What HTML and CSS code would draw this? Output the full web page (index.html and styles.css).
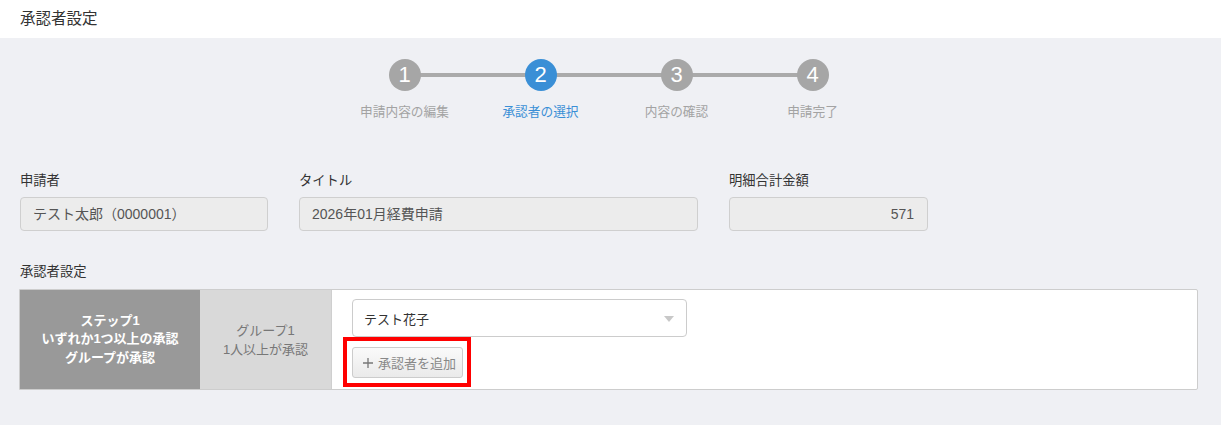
FILE: index.html
```html
<!DOCTYPE html>
<html lang="ja">
<head>
<meta charset="utf-8">
<link rel="stylesheet" href="styles.css">
</head>
<body>
<header class="topbar">承認者設定</header>
<main class="content">
  <div class="stepper">
    <div class="step done">
      <div class="step-track"><span class="dot">1</span></div>
      <div class="step-label">申請内容の編集</div>
    </div>
    <div class="step active">
      <div class="step-track"><span class="dot">2</span></div>
      <div class="step-label">承認者の選択</div>
    </div>
    <div class="step">
      <div class="step-track"><span class="dot">3</span></div>
      <div class="step-label">内容の確認</div>
    </div>
    <div class="step last">
      <div class="step-track"><span class="dot">4</span></div>
      <div class="step-label">申請完了</div>
    </div>
  </div>

  <div class="fields">
    <div class="field f-applicant">
      <label class="field-label">申請者</label>
      <div class="input">テスト太郎（0000001）</div>
    </div>
    <div class="field f-title">
      <label class="field-label">タイトル</label>
      <div class="input">2026年01月経費申請</div>
    </div>
    <div class="field f-amount">
      <label class="field-label">明細合計金額</label>
      <div class="input num">571</div>
    </div>
  </div>

  <div class="section-label">承認者設定</div>
  <div class="approval">
    <div class="cell-step">ステップ1<br>いずれか1つ以上の承認<br>グループが承認</div>
    <div class="cell-group">グループ1<br>1人以上が承認</div>
    <div class="cell-body">
      <div class="select">
        <span>テスト花子</span>
        <svg class="caret" width="10" height="6" viewBox="0 0 10 6"><path d="M0 0h10L5 6z" fill="#c8c8c8"/></svg>
      </div>
      <div class="highlight">
        <button class="add-btn"><svg class="plus" width="10" height="10" viewBox="0 0 10 10"><path d="M5 0v10M0 5h10" stroke="#777" stroke-width="1.3" fill="none"/></svg>承認者を追加</button>
      </div>
    </div>
  </div>
</main>
</body>
</html>
```

FILE: styles.css
```css
* { box-sizing: border-box; }
html, body { margin: 0; padding: 0; }
body {
  font-family: "Liberation Sans", "Noto Sans CJK JP", sans-serif;
  color: #333;
  background: #eff0f4;
  font-size: 13px;
  height: 425px;
  overflow: hidden;
}
.topbar {
  background: #fff;
  height: 38px;
  padding: 0 20px;
  line-height: 37px;
  font-size: 15.5px;
  color: #333;
}
.content { padding: 0 20px; }

.stepper {
  display: flex;
  justify-content: center;
  padding: 21px 4px 0 0;
  height: 132px;
}
.step { width: 136px; display: flex; flex-direction: column; align-items: center; }
.step-track {
  position: relative;
  width: 100%;
  height: 32px;
  display: flex;
  justify-content: center;
}
.step-track::after {
  content: "";
  position: absolute;
  left: 50%;
  width: 100%;
  top: 14px;
  height: 4px;
  background: #aaa;
}
.step.last .step-track::after { display: none; }
.dot {
  position: relative;
  z-index: 1;
  width: 32px;
  height: 32px;
  border-radius: 50%;
  background: #a6a6a6;
  color: #fff;
  font-size: 22px;
  line-height: 32px;
  text-align: center;
}
.step.active .dot { background: #3a8fd6; }
.step-label {
  margin-top: 10px;
  font-size: 12.7px;
  color: #a3a3a3;
  white-space: nowrap;
}
.step.active .step-label { color: #3a8fd6; }

.fields { display: flex; gap: 31px; }
.field-label { display: block; font-size: 13.3px; color: #333; height: 27px; line-height: 22px; }
.input {
  height: 34px;
  border: 1px solid #cfcfcf;
  border-radius: 4px;
  background: #ececec;
  padding: 0 13px 0 12px;
  line-height: 32px;
  font-size: 14px;
  color: #555;
}
.input.num { text-align: right; }
.f-applicant { width: 248px; }
.f-title { width: 399px; }
.f-amount { width: 199px; }

.section-label { margin-top: 30px; height: 28px; line-height: 22px; font-size: 13.3px; color: #333; }

.approval {
  display: flex;
  width: 1179px;
  height: 101px;
  margin-left: -1px;
  border: 1px solid #cdcdcd;
  border-radius: 0 2px 2px 0;
  background: #fff;
}
.cell-step {
  width: 180px;
  background: #999;
  color: #fff;
  font-weight: bold;
  font-size: 13px;
  line-height: 18.5px;
  text-align: center;
  display: flex;
  align-items: center;
  justify-content: center;
}
.cell-group {
  width: 132px;
  background: #d9d9d9;
  border-right: 1px solid #cfcfcf;
  color: #777;
  font-size: 13px;
  line-height: 19px;
  text-align: center;
  display: flex;
  align-items: center;
  justify-content: center;
}
.cell-body { padding: 9px 0 0 20px; flex: 1; }
.select {
  width: 335px;
  height: 38px;
  border: 1px solid #ccc;
  border-radius: 4px;
  background: #fff;
  display: flex;
  align-items: center;
  justify-content: space-between;
  padding: 0 12px 0 11px;
  font-size: 13px;
  color: #333;
}
.caret { margin-top: 2px; }
.highlight {
  display: inline-block;
  margin: 0 0 0 -9px;
  border: 4px solid #f00;
  padding: 6px 4px 5px 5px;
}
.add-btn {
  font-family: inherit;
  height: 31px;
  width: 111px;
  border: 1px solid #ccc;
  border-radius: 3px;
  background: linear-gradient(#fafafa, #eaeaea);
  color: #888;
  font-size: 13px;
  padding: 0 0 0 10px;
  display: flex;
  align-items: center;
  gap: 5px;
}
.plus { flex: none; }
```
